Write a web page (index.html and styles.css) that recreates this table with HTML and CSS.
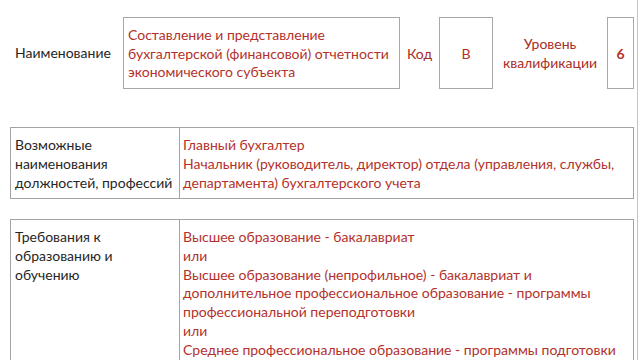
FILE: index.html
```html
<!DOCTYPE html>
<html lang="ru">
<head>
<meta charset="utf-8">
<link rel="stylesheet" href="styles.css">
</head>
<body>
<div class="page">
  <div class="head-row">
    <div class="head-label">Наименование</div>
    <div class="box box-name">Составление и представление<br>бухгалтерской (финансовой) отчетности<br>экономического субъекта</div>
    <div class="head-cell code-label">Код</div>
    <div class="box box-code">В</div>
    <div class="head-cell level-label">Уровень<br>квалификации</div>
    <div class="box box-level">6</div>
  </div>

  <div class="table table-posts">
    <div class="cell cell-label">Возможные<br>наименования<br>должностей, профессий</div>
    <div class="cell cell-value">Главный бухгалтер<br>Начальник (руководитель, директор) отдела (управления, службы,<br>департамента) бухгалтерского учета</div>
  </div>

  <div class="table table-edu">
    <div class="cell cell-label">Требования к<br>образованию и<br>обучению</div>
    <div class="cell cell-value">Высшее образование - бакалавриат<br>или<br>Высшее образование (непрофильное) - бакалавриат и<br>дополнительное профессиональное образование - программы<br>профессиональной переподготовки<br>или<br>Среднее профессиональное образование - программы подготовки</div>
  </div>
</div>
</body>
</html>
```
FILE: styles.css
```css
html, body {
  margin: 0;
  padding: 0;
  background: #ffffff;
}

.page {
  width: 637px;
  height: 360px;
  overflow: hidden;
  border-right: 1px solid #c4c4c4;
  font-family: "Lato", "Open Sans", sans-serif;
  font-size: 14px;
  line-height: 18.8px;
  color: #262626;
}

.head-row {
  display: flex;
  align-items: center;
  padding-top: 17px;
  padding-left: 15px;
}

.head-label {
  width: 108px;
}

.box {
  box-sizing: border-box;
  height: 72px;
  border: 1px solid #a8a8a8;
  color: #b3312b;
  display: flex;
  align-items: center;
  padding-top: 2px;
}

.box-name {
  width: 277px;
  padding-left: 4px;
}

.head-cell {
  color: #a82d27;
  text-align: center;
  padding-top: 2px;
}

.code-label {
  width: 39px;
}

.box-code {
  width: 54px;
  justify-content: center;
}

.level-label {
  width: 114px;
}

.box-level {
  width: 27px;
  justify-content: center;
  font-weight: 700;
}

.table {
  display: grid;
  grid-template-columns: 168px 456px;
  margin-left: 10px;
  border: 1px solid #a3a3a3;
  width: 624px;
  box-sizing: border-box;
}

.table-posts {
  margin-top: 38px;
  height: 72px;
}

.table-edu {
  margin-top: 20px;
  height: 160px;
}

.cell {
  padding-top: 8px;
}

.cell-label {
  padding-left: 4px;
}

.cell-value {
  border-left: 1px solid #a3a3a3;
  padding-left: 3px;
  color: #b3312b;
  white-space: nowrap;
}
```
